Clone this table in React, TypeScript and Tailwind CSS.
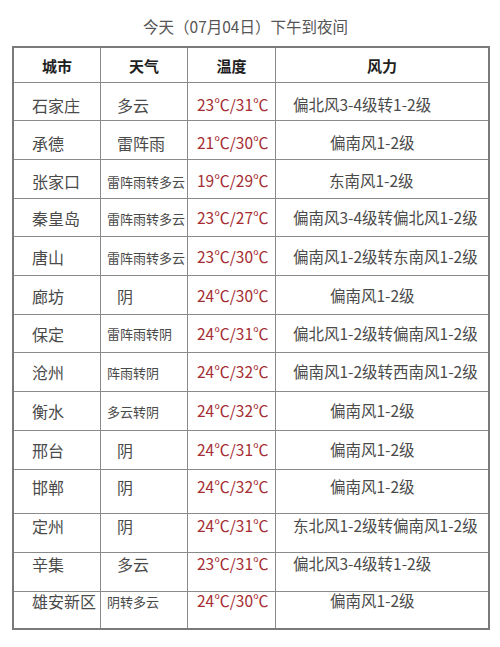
import React from 'react'

type Row = {
  city: string
  weather: string
  small?: boolean
  temp: string
  wind: string
  windPad: string
  h: string
  shift: string
  last?: boolean
}

const rows: Row[] = [
  { city: '石家庄', weather: '多云', temp: '23℃/31℃', wind: '偏北风3-4级转1-2级', windPad: 'pl-[17px]', h: 'h-[38px]', shift: 'pt-[6px]' },
  { city: '承德', weather: '雷阵雨', temp: '21℃/30℃', wind: '偏南风1-2级', windPad: 'pl-[54px]', h: 'h-[39px]', shift: 'pt-[5px]' },
  { city: '张家口', weather: '雷阵雨转多云', small: true, temp: '19℃/29℃', wind: '东南风1-2级', windPad: 'pl-[53px]', h: 'h-[39px]', shift: 'pt-[4px]' },
  { city: '秦皇岛', weather: '雷阵雨转多云', small: true, temp: '23℃/27℃', wind: '偏南风3-4级转偏北风1-2级', windPad: 'pl-[17px]', h: 'h-[38px]', shift: 'pt-[1px]' },
  { city: '唐山', weather: '雷阵雨转多云', small: true, temp: '23℃/30℃', wind: '偏南风1-2级转东南风1-2级', windPad: 'pl-[17px]', h: 'h-[39px]', shift: 'pt-[2px]' },
  { city: '廊坊', weather: '阴', temp: '24℃/30℃', wind: '偏南风1-2级', windPad: 'pl-[54px]', h: 'h-[39px]', shift: 'pt-[1px]' },
  { city: '保定', weather: '雷阵雨转阴', small: true, temp: '24℃/31℃', wind: '偏北风1-2级转偏南风1-2级', windPad: 'pl-[17px]', h: 'h-[38px]', shift: 'pt-0' },
  { city: '沧州', weather: '阵雨转阴', small: true, temp: '24℃/32℃', wind: '偏南风1-2级转西南风1-2级', windPad: 'pl-[17px]', h: 'h-[39px]', shift: 'pt-0' },
  { city: '衡水', weather: '多云转阴', small: true, temp: '24℃/32℃', wind: '偏南风1-2级', windPad: 'pl-[54px]', h: 'h-[39px]', shift: 'pt-0' },
  { city: '邢台', weather: '阴', temp: '24℃/31℃', wind: '偏南风1-2级', windPad: 'pl-[54px]', h: 'h-[39px]', shift: 'pt-0' },
  { city: '邯郸', weather: '阴', temp: '24℃/32℃', wind: '偏南风1-2级', windPad: 'pl-[54px]', h: 'h-[44px]', shift: 'pb-[9px]' },
  { city: '定州', weather: '阴', temp: '24℃/31℃', wind: '东北风1-2级转偏南风1-2级', windPad: 'pl-[17px]', h: 'h-[39px]', shift: 'pb-[15px]' },
  { city: '辛集', weather: '多云', temp: '23℃/31℃', wind: '偏北风3-4级转1-2级', windPad: 'pl-[17px]', h: 'h-[39px]', shift: 'pb-[17px]' },
  { city: '雄安新区', weather: '阴转多云', small: true, temp: '24℃/30℃', wind: '偏南风1-2级', windPad: 'pl-[54px]', h: 'h-[36px]', shift: 'pb-[18px]', last: true },
]

const App: React.FC = () => {
  return (
    <div className="w-[500px] h-[647px] bg-white font-['Noto_Sans_CJK_SC','Noto_Sans',sans-serif] text-[#4a4a4a]">
      <div className="h-[46px] flex items-center justify-center pt-[8px] pr-[9px] text-[15.5px] text-[#555]">
        今天（07月04日）下午到夜间
      </div>

      <div className="ml-[12px] w-[478px] border-2 border-[#7a7a7a]">
        {/* header */}
        <div className="flex h-[35px] border-b border-[#8a8a8a] text-[15px] font-bold text-[#1e1e1e] leading-none">
          <div className="w-[87px] border-r border-[#8a8a8a] flex items-center justify-center">城市</div>
          <div className="w-[87px] border-r border-[#8a8a8a] flex items-center justify-center">天气</div>
          <div className="w-[88px] border-r border-[#8a8a8a] flex items-center justify-center">温度</div>
          <div className="flex-1 flex items-center justify-center">风力</div>
        </div>

        {rows.map((r) => (
          <div
            key={r.city}
            className={`flex ${r.h} ${r.last ? '' : 'border-b border-[#8a8a8a]'} leading-none`}
          >
            <div className={`w-[87px] border-r border-[#8a8a8a] flex items-center pl-[18px] text-[16px] ${r.shift}`}>
              {r.city}
            </div>
            <div
              className={`w-[87px] border-r border-[#8a8a8a] flex items-center ${
                r.small ? 'pl-[6px] text-[13px]' : 'pl-[16px] text-[16px]'
              } ${r.shift}`}
            >
              {r.weather}
            </div>
            <div className={`w-[88px] border-r border-[#8a8a8a] flex items-center pl-[9px] text-[15.5px] text-[#a52d33] ${r.shift}`}>
              {r.temp}
            </div>
            <div className={`flex-1 flex items-center ${r.windPad} text-[15.5px] whitespace-nowrap ${r.shift}`}>
              {r.wind}
            </div>
          </div>
        ))}
      </div>
    </div>
  )
}

export default App
